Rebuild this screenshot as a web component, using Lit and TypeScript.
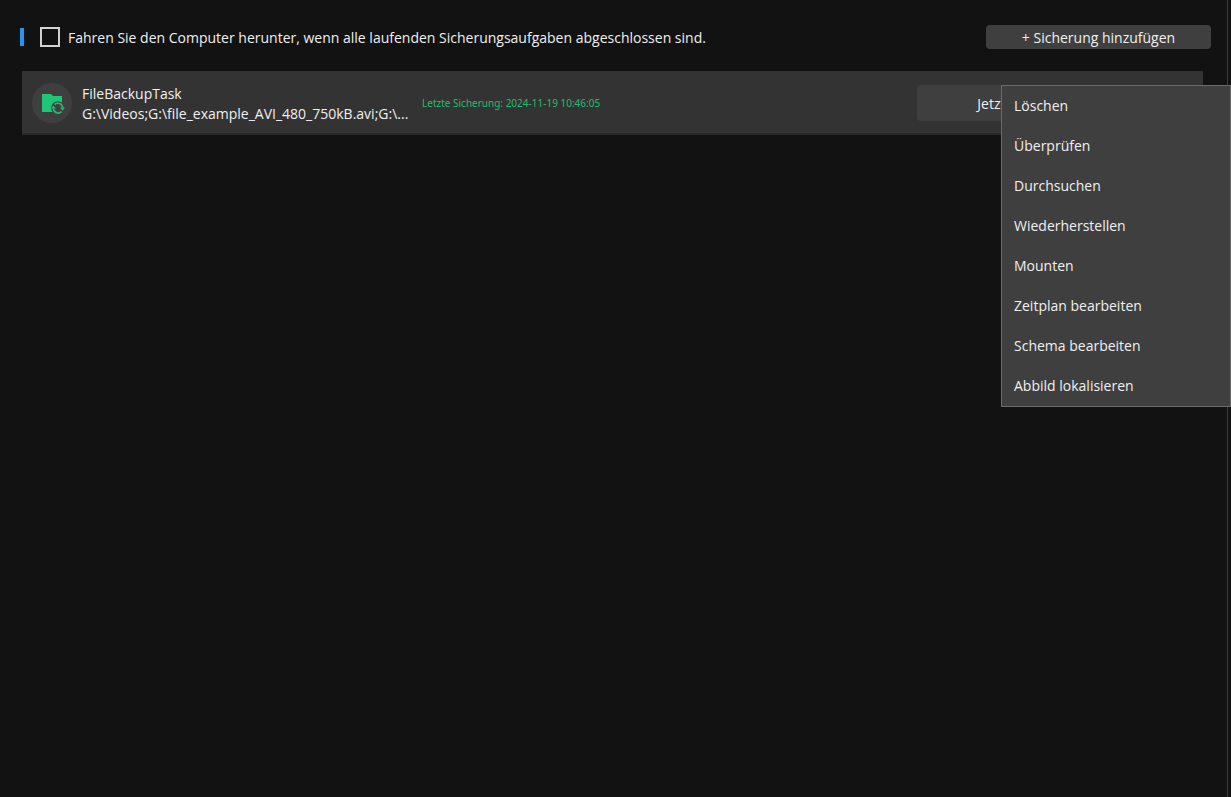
import { LitElement, html, css } from "lit";
import { customElement, state } from "lit/decorators.js";

interface BackupTask {
  name: string;
  source: string;
  status: string;
}

const MENU_ITEMS = [
  "Löschen",
  "Überprüfen",
  "Durchsuchen",
  "Wiederherstellen",
  "Mounten",
  "Zeitplan bearbeiten",
  "Schema bearbeiten",
  "Abbild lokalisieren",
];

@customElement("app-root")
export class AppRoot extends LitElement {
  static styles = css`
    :host {
      display: block;
      box-sizing: border-box;
      min-height: 100vh;
      padding-right: 3px;
      background: #121212;
      color: #f0f0f0;
      font-family: "Segoe UI", "Open Sans", "Noto Sans", sans-serif;
      font-size: 14px;
      line-height: 20px;
    }
    .page {
      box-sizing: border-box;
      min-height: 100vh;
      border-right: 1px solid #3a3a3a;
    }
    .toolbar {
      display: flex;
      align-items: center;
      justify-content: space-between;
      padding: 25px 16px 22px 20px;
    }
    .option {
      display: flex;
      align-items: center;
      gap: 8px;
      border-left: 4px solid #2196f3;
      padding-left: 16px;
      height: 18px;
      white-space: nowrap;
    }
    .caption {
      padding-top: 2px;
    }
    .check {
      appearance: none;
      box-sizing: border-box;
      width: 20px;
      height: 20px;
      margin: 0;
      border: 2px solid #d2d2d2;
    }
    .check:checked {
      background: #2196f3;
    }
    .add {
      width: 225px;
      height: 24px;
      border: 0;
      border-radius: 4px;
      padding: 2px 0 0;
      background: #3f3f3f;
      color: inherit;
      font: inherit;
    }
  `;

  render() {
    return html`
      <main class="page">
        <header class="toolbar">
          <label class="option">
            <input class="check" type="checkbox" />
            <span class="caption"
              >Fahren Sie den Computer herunter, wenn alle laufenden Sicherungsaufgaben abgeschlossen sind.</span
            >
          </label>
          <button class="add">+ Sicherung hinzufügen</button>
        </header>
        <backup-task
          .task=${{
            name: "FileBackupTask",
            source: "G:\\Videos;G:\\file_example_AVI_480_750kB.avi;G:\\...",
            status: "Letzte Sicherung: 2024-11-19 10:46:05",
          }}
        ></backup-task>
      </main>
    `;
  }
}

@customElement("backup-task")
export class BackupTaskRow extends LitElement {
  static properties = { task: { attribute: false } };
  declare task: BackupTask;

  @state() private menuOpen = true;

  static styles = css`
    :host {
      display: block;
      margin: 0 24px 0 22px;
    }
    .row {
      display: flex;
      align-items: center;
      box-sizing: border-box;
      height: 64px;
      padding: 2px 10px 0;
      border-bottom: 2px solid #282828;
      background: #333333;
    }
    .badge {
      flex: none;
      width: 40px;
      height: 40px;
      border-radius: 50%;
      background: #3f3f3f;
    }
    .info {
      flex: none;
      width: 330px;
      margin: 0 10px;
      padding-top: 2px;
      white-space: nowrap;
    }
    .status {
      flex: 1;
      color: #1fbf6e;
      font-family: "Segoe UI", "Noto Sans", sans-serif;
      font-size: 10px;
      white-space: nowrap;
    }
    .actions {
      position: relative;
      display: flex;
      flex: none;
      width: 276px;
      height: 36px;
    }
    button {
      border: 0;
      padding: 0;
      background: #3f3f3f;
      color: inherit;
      font: inherit;
    }
    .run {
      width: 200px;
      padding-top: 2px;
      border-radius: 4px 0 0 4px;
    }
    .more {
      flex: 1;
      border-radius: 0 4px 4px 0;
    }
    .menu {
      position: absolute;
      top: 0;
      left: 84px;
      z-index: 1;
      box-sizing: border-box;
      width: 230px;
      border: 1px solid #6b6b6b;
      background: #3f3f3f;
    }
    .item {
      display: block;
      width: 100%;
      height: 40px;
      padding: 0 12px;
      text-align: left;
    }
    .item:hover {
      background: #4c4c4c;
    }
  `;

  render() {
    return html`
      <article class="row">
        <svg class="badge" viewBox="0 0 40 40" aria-hidden="true">
          <path fill="#1fc677" d="M10 11h9l2 2h9v16H10z" />
          <circle cx="26" cy="25" r="6.8" fill="#3f3f3f" />
          <path
            fill="none"
            stroke="#2bb574"
            stroke-width="1.7"
            d="M22.6 21.6a4.7 4.7 0 0 1 8 3.2M29.4 28.6a4.7 4.7 0 0 1-8-3.2"
          />
          <path fill="#2bb574" d="M28 24.6h5l-2.5 3.2zM19 25.6h5l-2.5-3.2z" />
        </svg>
        <div class="info">
          <div>${this.task.name}</div>
          <div>${this.task.source}</div>
        </div>
        <div class="status">${this.task.status}</div>
        <div class="actions">
          <button class="run">Jetzt sichern</button>
          <button
            class="more"
            aria-label="Weitere Aktionen"
            @click=${() => (this.menuOpen = !this.menuOpen)}
          ></button>
          ${this.menuOpen
            ? html`<div class="menu" role="menu">
                ${MENU_ITEMS.map(
                  (label) => html`<button class="item" role="menuitem">${label}</button>`
                )}
              </div>`
            : null}
        </div>
      </article>
    `;
  }
}
